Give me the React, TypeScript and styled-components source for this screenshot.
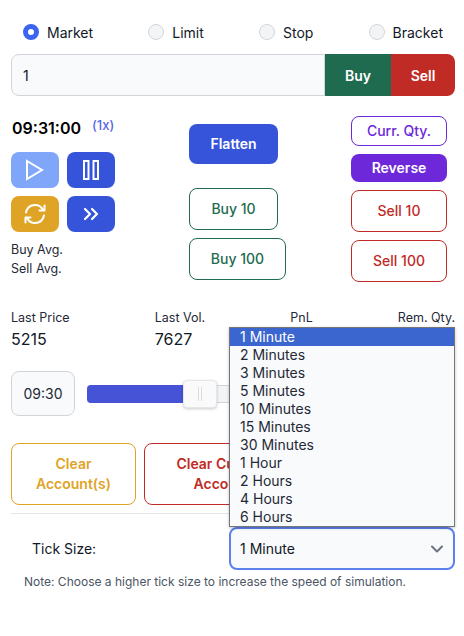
import React from "react";
import styled, { createGlobalStyle } from "styled-components";

const GlobalStyle = createGlobalStyle`
  html, body {
    margin: 0;
    padding: 0;
    background: #fff;
    font-family: Inter, "Noto Sans", sans-serif;
    color: #111827;
  }
  * { box-sizing: border-box; }
`;

const Page = styled.div`
  width: 464px;
  height: 636px;
  padding: 22px 9px 0 11px;
  overflow: hidden;
`;

const RadioRow = styled.div`
  display: flex;
  justify-content: space-between;
  padding: 0 12px;
  height: 20px;
`;

const RadioItem = styled.label`
  display: flex;
  align-items: center;
  gap: 8px;
  font-size: 14px;
  color: #111827;
`;

const RadioDot = styled.span<{ $checked?: boolean }>`
  width: 16px;
  height: 16px;
  border-radius: 50%;
  background: ${(p) => (p.$checked ? "#fff" : "#f3f4f6")};
  border: ${(p) => (p.$checked ? "5px solid #3b65f0" : "1px solid #d1d5db")};
`;

const OrderRow = styled.div`
  display: flex;
  height: 42px;
  margin-top: 12px;
`;

const QtyInput = styled.div`
  flex: 1;
  display: flex;
  align-items: center;
  padding-left: 11px;
  font-size: 14px;
  color: #111827;
  background: #f9fafb;
  border: 1px solid #d1d5db;
  border-radius: 8px 0 0 8px;
`;

const OrderButton = styled.div<{ $bg: string; $w: number; $last?: boolean }>`
  width: ${(p) => p.$w}px;
  display: flex;
  align-items: center;
  justify-content: center;
  color: #fff;
  font-size: 14px;
  font-weight: 600;
  background: ${(p) => p.$bg};
  border-radius: ${(p) => (p.$last ? "0 8px 8px 0" : "0")};
`;

const Controls = styled.div`
  display: grid;
  grid-template-columns: 178px 162px 96px;
  margin-top: 20px;
`;

const Column = styled.div<{ $top?: number }>`
  display: flex;
  flex-direction: column;
  align-items: flex-start;
  gap: 8px;
  padding-top: ${(p) => p.$top ?? 0}px;
`;

const ClockRow = styled.div`
  display: flex;
  height: 24px;
  align-items: center;
  gap: 11px;
  margin-bottom: 4px;
  padding-left: 1px;
`;

const Clock = styled.span`
  font-size: 16px;
  font-weight: 600;
  color: #000;
`;

const Speed = styled.span`
  font-size: 13px;
  font-weight: 500;
  color: #5a67e8;
  margin-bottom: 6px;
`;

const IconGrid = styled.div`
  display: grid;
  grid-template-columns: 48px 48px;
  grid-auto-rows: 36px;
  gap: 8px;
`;

const IconButton = styled.div<{ $bg: string }>`
  display: flex;
  align-items: center;
  justify-content: center;
  background: ${(p) => p.$bg};
  border-radius: 8px;
`;

const AvgList = styled.div`
  font-size: 12.5px;
  line-height: 19px;
  color: #1f2937;
`;

const SolidButton = styled.div<{ $bg: string; $w: number; $h: number }>`
  width: ${(p) => p.$w}px;
  height: ${(p) => p.$h}px;
  display: flex;
  align-items: center;
  justify-content: center;
  padding-bottom: 1px;
  background: ${(p) => p.$bg};
  color: #fff;
  font-size: 14px;
  font-weight: 600;
  border-radius: 8px;
`;

const OutlineButton = styled.div<{ $color: string; $w: number; $h: number; $gapAbove?: number }>`
  width: ${(p) => p.$w}px;
  height: ${(p) => p.$h}px;
  margin-top: ${(p) => p.$gapAbove ?? 0}px;
  display: flex;
  align-items: center;
  justify-content: center;
  padding-bottom: 1px;
  background: #fff;
  color: ${(p) => p.$color};
  border: 1px solid ${(p) => p.$color};
  font-size: 14px;
  font-weight: 500;
  border-radius: 8px;
`;

const Stats = styled.div`
  display: flex;
  justify-content: space-between;
  margin-top: 26px;
`;

const StatLabel = styled.div`
  font-size: 12.5px;
  line-height: 20px;
  color: #1f2937;
`;

const StatValue = styled.div`
  font-size: 16px;
  line-height: 22px;
  color: #111827;
`;

const SliderRow = styled.div`
  display: flex;
  align-items: center;
  gap: 12px;
  margin-top: 21px;
`;

const TimeBox = styled.div`
  width: 64px;
  height: 45px;
  display: flex;
  align-items: center;
  justify-content: center;
  font-size: 14px;
  color: #1f2937;
  background: #f9fafb;
  border: 1px solid #d1d5db;
  border-radius: 8px;
`;

const Track = styled.div`
  position: relative;
  flex: 1;
  height: 18px;
  background: #f3f4f6;
  border: 1px solid #d1d5db;
  border-radius: 4px;
`;

const TrackFill = styled.div`
  height: 100%;
  margin: -1px 0 0 -1px;
  box-sizing: content-box;
  padding-bottom: 2px;
  background: #4753d6;
  border-radius: 4px 0 0 4px;
`;

const Thumb = styled.div`
  position: absolute;
  left: 95px;
  top: -6px;
  width: 34px;
  height: 28px;
  display: flex;
  align-items: center;
  justify-content: center;
  gap: 2px;
  background: #fafafa;
  border: 1px solid #e5e7eb;
  border-radius: 4px;
  box-shadow: 0 1px 3px rgba(0, 0, 0, 0.2);
`;

const ThumbLine = styled.span`
  width: 1px;
  height: 14px;
  background: #dcdcdc;
`;

const ClearRow = styled.div`
  display: flex;
  gap: 8px;
  margin-top: 27px;
`;

const ClearButton = styled.div<{ $color: string; $w: number }>`
  width: ${(p) => p.$w}px;
  height: 62px;
  display: flex;
  align-items: center;
  justify-content: center;
  text-align: center;
  color: ${(p) => p.$color};
  background: #fff;
  border: 1px solid ${(p) => p.$color};
  border-radius: 8px;
  font-size: 14px;
  font-weight: 600;
  line-height: 20px;
`;

const Divider = styled.div`
  height: 1px;
  background: #e5e7eb;
  margin-top: 8px;
`;

const TickRow = styled.div`
  display: flex;
  align-items: center;
  margin-top: 13px;
  padding-left: 21px;
`;

const TickLabel = styled.div`
  width: 197px;
  font-size: 14px;
  color: #111827;
`;

const SelectWrap = styled.div`
  position: relative;
  width: 226px;
`;

const SelectBox = styled.div`
  height: 43px;
  display: flex;
  align-items: center;
  justify-content: space-between;
  padding: 0 10px 0 9px;
  font-size: 14px;
  color: #111827;
  background: #f9fafb;
  border: 2px solid #5b81ee;
  border-radius: 8px;
`;

const OptionList = styled.div`
  position: absolute;
  left: 0;
  right: 0;
  bottom: 100%;
  z-index: 5;
  background: #f9fafb;
  border: 1px solid #767676;
  box-shadow: 0 1px 3px rgba(0, 0, 0, 0.25);
`;

const Option = styled.div<{ $active?: boolean }>`
  height: 18px;
  line-height: 18px;
  padding-left: 10px;
  font-size: 14px;
  color: ${(p) => (p.$active ? "#fff" : "#1f2937")};
  background: ${(p) => (p.$active ? "#3b66d0" : "transparent")};
`;

const Note = styled.div`
  margin-top: 4px;
  padding-left: 13px;
  font-size: 12px;
  line-height: 16px;
  color: #4b5563;
`;

const orderTypes = ["Market", "Limit", "Stop", "Bracket"];
const tickOptions = [
  "1 Minute", "2 Minutes", "3 Minutes", "5 Minutes", "10 Minutes", "15 Minutes",
  "30 Minutes", "1 Hour", "2 Hours", "4 Hours", "6 Hours",
];
const stats = [
  { label: "Last Price", value: "5215" },
  { label: "Last Vol.", value: "7627" },
  { label: "PnL", value: "" },
  { label: "Rem. Qty.", value: "" },
];

const PlayIcon = () => (
  <svg width="20" height="22" viewBox="0 0 20 22" fill="none" stroke="#fff" strokeWidth="2">
    <path d="M2 2 L17 11 L2 20 Z" />
  </svg>
);

const PauseIcon = () => (
  <svg width="16" height="20" viewBox="0 0 16 20" fill="none" stroke="#fff" strokeWidth="2">
    <rect x="1" y="1" width="4.5" height="18" />
    <rect x="10.5" y="1" width="4.5" height="18" />
  </svg>
);

const RefreshIcon = () => (
  <svg width="24" height="22" viewBox="0 0 24 22" fill="none" stroke="#fff" strokeWidth="2" strokeLinecap="round" strokeLinejoin="round">
    <path d="M3 9.5 C4 5 7.5 2 12 2 C15.5 2 18.5 4 20 7" />
    <path d="M21.5 2.5 V7.5 H16.5" />
    <path d="M21 12.5 C20 17 16.5 20 12 20 C8.5 20 5.5 18 4 15" />
    <path d="M2.5 19.5 V14.5 H7.5" />
  </svg>
);

const ForwardIcon = () => (
  <svg width="16" height="14" viewBox="0 0 16 14" fill="none" stroke="#fff" strokeWidth="2.2" strokeLinecap="round" strokeLinejoin="round">
    <path d="M2 2 L7 7 L2 12" />
    <path d="M9 2 L14 7 L9 12" />
  </svg>
);

const ChevronIcon = () => (
  <svg width="12" height="8" viewBox="0 0 12 8" fill="none" stroke="#6b7280" strokeWidth="2" strokeLinecap="round" strokeLinejoin="round">
    <path d="M1 1.5 L6 6.5 L11 1.5" />
  </svg>
);

const App: React.FC = () => {
  const sliderPosition = 104;

  return (
    <Page>
      <GlobalStyle />
      <RadioRow>
        {orderTypes.map((t) => (
          <RadioItem key={t}>
            <RadioDot $checked={t === "Market"} />
            {t}
          </RadioItem>
        ))}
      </RadioRow>

      <OrderRow>
        <QtyInput>1</QtyInput>
        <OrderButton $bg="#1f6b4f" $w={66}>Buy</OrderButton>
        <OrderButton $bg="#c02b26" $w={64} $last>Sell</OrderButton>
      </OrderRow>

      <Controls>
        <Column>
          <ClockRow>
            <Clock>09:31:00</Clock>
            <Speed>(1x)</Speed>
          </ClockRow>
          <IconGrid>
            <IconButton $bg="#7fa6f8"><PlayIcon /></IconButton>
            <IconButton $bg="#3654d9"><PauseIcon /></IconButton>
            <IconButton $bg="#dfa326"><RefreshIcon /></IconButton>
            <IconButton $bg="#3654d9"><ForwardIcon /></IconButton>
          </IconGrid>
          <AvgList>
            <div>Buy Avg.</div>
            <div>Sell Avg.</div>
          </AvgList>
        </Column>

        <Column $top={8}>
          <SolidButton $bg="#3654d9" $w={89} $h={40}>Flatten</SolidButton>
          <OutlineButton $color="#1f6b4f" $w={89} $h={42} $gapAbove={16}>Buy 10</OutlineButton>
          <OutlineButton $color="#1f6b4f" $w={97} $h={42}>Buy 100</OutlineButton>
        </Column>

        <Column>
          <OutlineButton $color="#6d28d9" $w={96} $h={30}>Curr. Qty.</OutlineButton>
          <SolidButton $bg="#6d28d9" $w={96} $h={28}>Reverse</SolidButton>
          <OutlineButton $color="#c02b26" $w={96} $h={42}>Sell 10</OutlineButton>
          <OutlineButton $color="#c02b26" $w={96} $h={42}>Sell 100</OutlineButton>
        </Column>
      </Controls>

      <Stats>
        {stats.map((s) => (
          <div key={s.label}>
            <StatLabel>{s.label}</StatLabel>
            <StatValue>{s.value}</StatValue>
          </div>
        ))}
      </Stats>

      <SliderRow>
        <TimeBox>09:30</TimeBox>
        <Track>
          <TrackFill style={{ width: sliderPosition }} />
          <Thumb>
            <ThumbLine />
            <ThumbLine />
          </Thumb>
        </Track>
      </SliderRow>

      <ClearRow>
        <ClearButton $color="#dfa326" $w={125}>Clear<br />Account(s)</ClearButton>
        <ClearButton $color="#c02b26" $w={156}>Clear Current<br />Account</ClearButton>
      </ClearRow>

      <Divider />

      <TickRow>
        <TickLabel>Tick Size:</TickLabel>
        <SelectWrap>
          <OptionList>
            {tickOptions.map((o, i) => (
              <Option key={o} $active={i === 0}>{o}</Option>
            ))}
          </OptionList>
          <SelectBox>
            1 Minute
            <ChevronIcon />
          </SelectBox>
        </SelectWrap>
      </TickRow>

      <Note>Note: Choose a higher tick size to increase the speed of simulation.</Note>
    </Page>
  );
};

export default App;
